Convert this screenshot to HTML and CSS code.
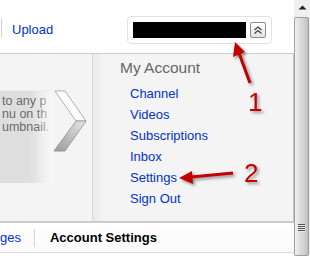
FILE: index.html
```html
<!DOCTYPE html>
<html lang="en">
<head>
    <meta charset="UTF-8">
    <title>My Account</title>
    <link rel="stylesheet" href="styles.css">
</head>
<body>
    <div class="window">
        <div class="page">
            <header class="topbar">
                <nav class="nav">
                    <a class="nav-link" href="#">Upload</a>
                </nav>
                <div class="account-box">
                    <div class="account-name"></div>
                    <button class="account-toggle">
                        <svg width="12" height="12" viewBox="0 0 12 12">
                            <path d="M2.5 6 L6 3 L9.5 6 M2.5 9.5 L6 6.5 L9.5 9.5" fill="none" stroke="#444" stroke-width="1.3"/>
                        </svg>
                    </button>
                </div>
            </header>

            <section class="panel">
                <div class="promo">
                    <div class="promo-box">
                        <div class="promo-text">to any p<br>nu on th<br>umbnail.</div>
                    </div>
                    <svg class="promo-arrow" width="34" height="62" viewBox="0 0 34 62">
                        <defs>
                            <linearGradient id="armLow" x1="1" y1="0" x2="0" y2="1">
                                <stop offset="0" stop-color="#e6e6e6"/>
                                <stop offset="1" stop-color="#9a9a9a"/>
                            </linearGradient>
                        </defs>
                        <polygon points="2,1 12,1 33,31 23,31" fill="#fdfdfd" stroke="#9c9c9c" stroke-width="0.8"/>
                        <polygon points="23,31 33,31 12,61 1,61" fill="url(#armLow)" stroke="#8c8c8c" stroke-width="0.8"/>
                    </svg>
                </div>
                <div class="menu">
                    <h2 class="menu-title">My Account</h2>
                    <ul class="menu-list">
                        <li><a href="#">Channel</a></li>
                        <li><a href="#">Videos</a></li>
                        <li><a href="#">Subscriptions</a></li>
                        <li><a href="#">Inbox</a></li>
                        <li><a href="#">Settings</a></li>
                        <li><a href="#">Sign Out</a></li>
                    </ul>
                </div>
            </section>

            <div class="tabs">
                <a class="tab-link" href="#">ges</a>
                <span class="tab-sep"></span>
                <span class="tab-current">Account Settings</span>
            </div>
        </div>

        <div class="scrollbar">
            <div class="scroll-up">
                <svg width="9" height="5" viewBox="0 0 9 5"><polygon points="0.5,4.5 4.5,0.5 8.5,4.5" fill="#222"/></svg>
            </div>
            <div class="scroll-thumb">
                <span class="grip"></span>
            </div>
        </div>

        <!-- callouts drawn over the screenshot -->
        <svg class="callouts" width="310" height="256" viewBox="0 0 310 256">
            <g class="callout">
                <line x1="250" y1="83" x2="239" y2="53" stroke="#c40000" stroke-width="3"/>
                <polygon points="235,42 245,52 233,57" fill="#c40000"/>
                <text x="248" y="111" class="callout-num">1</text>
            </g>
            <g class="callout">
                <line x1="233" y1="173" x2="191" y2="177" stroke="#c40000" stroke-width="3"/>
                <polygon points="179,178 192,171 193,184" fill="#c40000"/>
                <text x="244" y="182" class="callout-num">2</text>
            </g>
        </svg>
    </div>
</body>
</html>
```

FILE: styles.css
```css
/* Reset and base */
* {
    margin: 0;
    padding: 0;
    box-sizing: border-box;
}

body {
    font-family: "Liberation Sans", Arial, sans-serif;
    font-size: 13px;
    color: #000;
    background-color: white;
}

a {
    color: #0033cc;
    text-decoration: none;
}

.window {
    position: relative;
    display: flex;
    width: 310px;
    height: 256px;
    overflow: hidden;
}

.page {
    width: 294px;
    display: flex;
    flex-direction: column;
}

/* Top bar */
.topbar {
    height: 53px;
    display: flex;
    align-items: flex-start;
}

.nav {
    margin-top: 18px;
    margin-left: 1px;
    border-left: 1px solid #d0d0d0;
    height: 19px;
    padding-left: 10px;
    display: flex;
    align-items: center;
}

.nav-link {
    font-size: 13px;
    line-height: 16px;
    margin-top: 4px;
}

.account-box {
    margin-left: auto;
    margin-right: 22px;
    margin-top: 16px;
    width: 145px;
    height: 28px;
    border: 1px solid #e2e2e2;
    border-radius: 4px;
    display: flex;
    align-items: flex-start;
    padding: 5px 0 0 5px;
    gap: 4px;
}

.account-name {
    width: 113px;
    height: 16px;
    background-color: #000;
}

.account-toggle {
    width: 16px;
    height: 16px;
    border: 1px solid #8a8a8a;
    border-radius: 2px;
    background: linear-gradient(#ffffff, #e4e4e4);
    display: flex;
    align-items: center;
    justify-content: center;
}

/* Panel */
.panel {
    height: 170px;
    display: flex;
    background-color: #f4f4f4;
    border-top: 1px solid #cccccc;
    border-right: 1px solid #c8c8c8;
    border-bottom: 2px solid #cccccc;
}

.promo {
    width: 93px;
    border-right: 1px solid #d8d8d8;
    display: flex;
    align-items: flex-start;
    padding-top: 36px;
}

.promo-box {
    width: 53px;
    height: 93px;
    background: linear-gradient(to right, #dedede 55%, #f6f6f6 100%);
    border-top: 1px solid #ececec;
    position: relative;
    overflow: hidden;
}

.promo-box::after {
    content: "";
    position: absolute;
    top: 0;
    right: 0;
    width: 16px;
    height: 100%;
    background: linear-gradient(to right, rgba(244, 244, 244, 0), rgba(246, 246, 246, 0.9));
}

.promo-text {
    padding: 4px 0 0 2px;
    font-size: 12.5px;
    line-height: 13px;
    color: #6a6a6a;
    white-space: nowrap;
}

.promo-arrow {
    display: block;
    flex-shrink: 0;
}

/* Account menu */
.menu {
    flex: 1;
    padding: 5px 0 0 27px;
    background: linear-gradient(to right, #e9e9e9, #f4f4f4 10px);
}

.menu-title {
    font-size: 15.5px;
    font-weight: normal;
    line-height: 18px;
    color: #666666;
}

.menu-list {
    list-style: none;
    margin-top: 6px;
    padding-left: 10px;
}

.menu-list li {
    font-size: 13px;
    line-height: 21px;
}

/* Tabs */
.tabs {
    height: 30px;
    display: flex;
    align-items: center;
    border-bottom: 1px solid #dddddd;
    background: linear-gradient(#ffffff, #fafafa);
}

.tab-link {
    font-size: 13px;
}

.tab-sep {
    width: 1px;
    height: 18px;
    background-color: #d4d4d4;
    margin: 0 15px 0 13px;
}

.tab-current {
    font-size: 13px;
    font-weight: bold;
}

/* Scrollbar */
.scrollbar {
    width: 16px;
    display: flex;
    flex-direction: column;
    background-color: #ececec;
}

.scroll-up {
    height: 17px;
    display: flex;
    justify-content: center;
    padding-top: 5px;
    background-color: #f0f0f0;
}

.scroll-thumb {
    flex: 1;
    margin: 0 1px 0 0;
    border: 1px solid #9e9e9e;
    border-radius: 2px;
    background: linear-gradient(to right, #f2f2f2, #dcdcdc 40%, #cfcfcf 75%, #bdbdbd);
    display: flex;
    justify-content: center;
    padding-top: 206px;
}

.grip {
    width: 7px;
    height: 8px;
    background: repeating-linear-gradient(#555 0 1px, #e8e8e8 1px 2px);
}

/* Callouts */
.callouts {
    position: absolute;
    top: 0;
    left: 0;
    pointer-events: none;
}

.callout {
    filter: drop-shadow(2px 2px 1.5px rgba(0, 0, 0, 0.4));
}

.callout-num {
    font-family: "Liberation Sans", Arial, sans-serif;
    font-size: 26px;
    fill: #c40000;
}
```
